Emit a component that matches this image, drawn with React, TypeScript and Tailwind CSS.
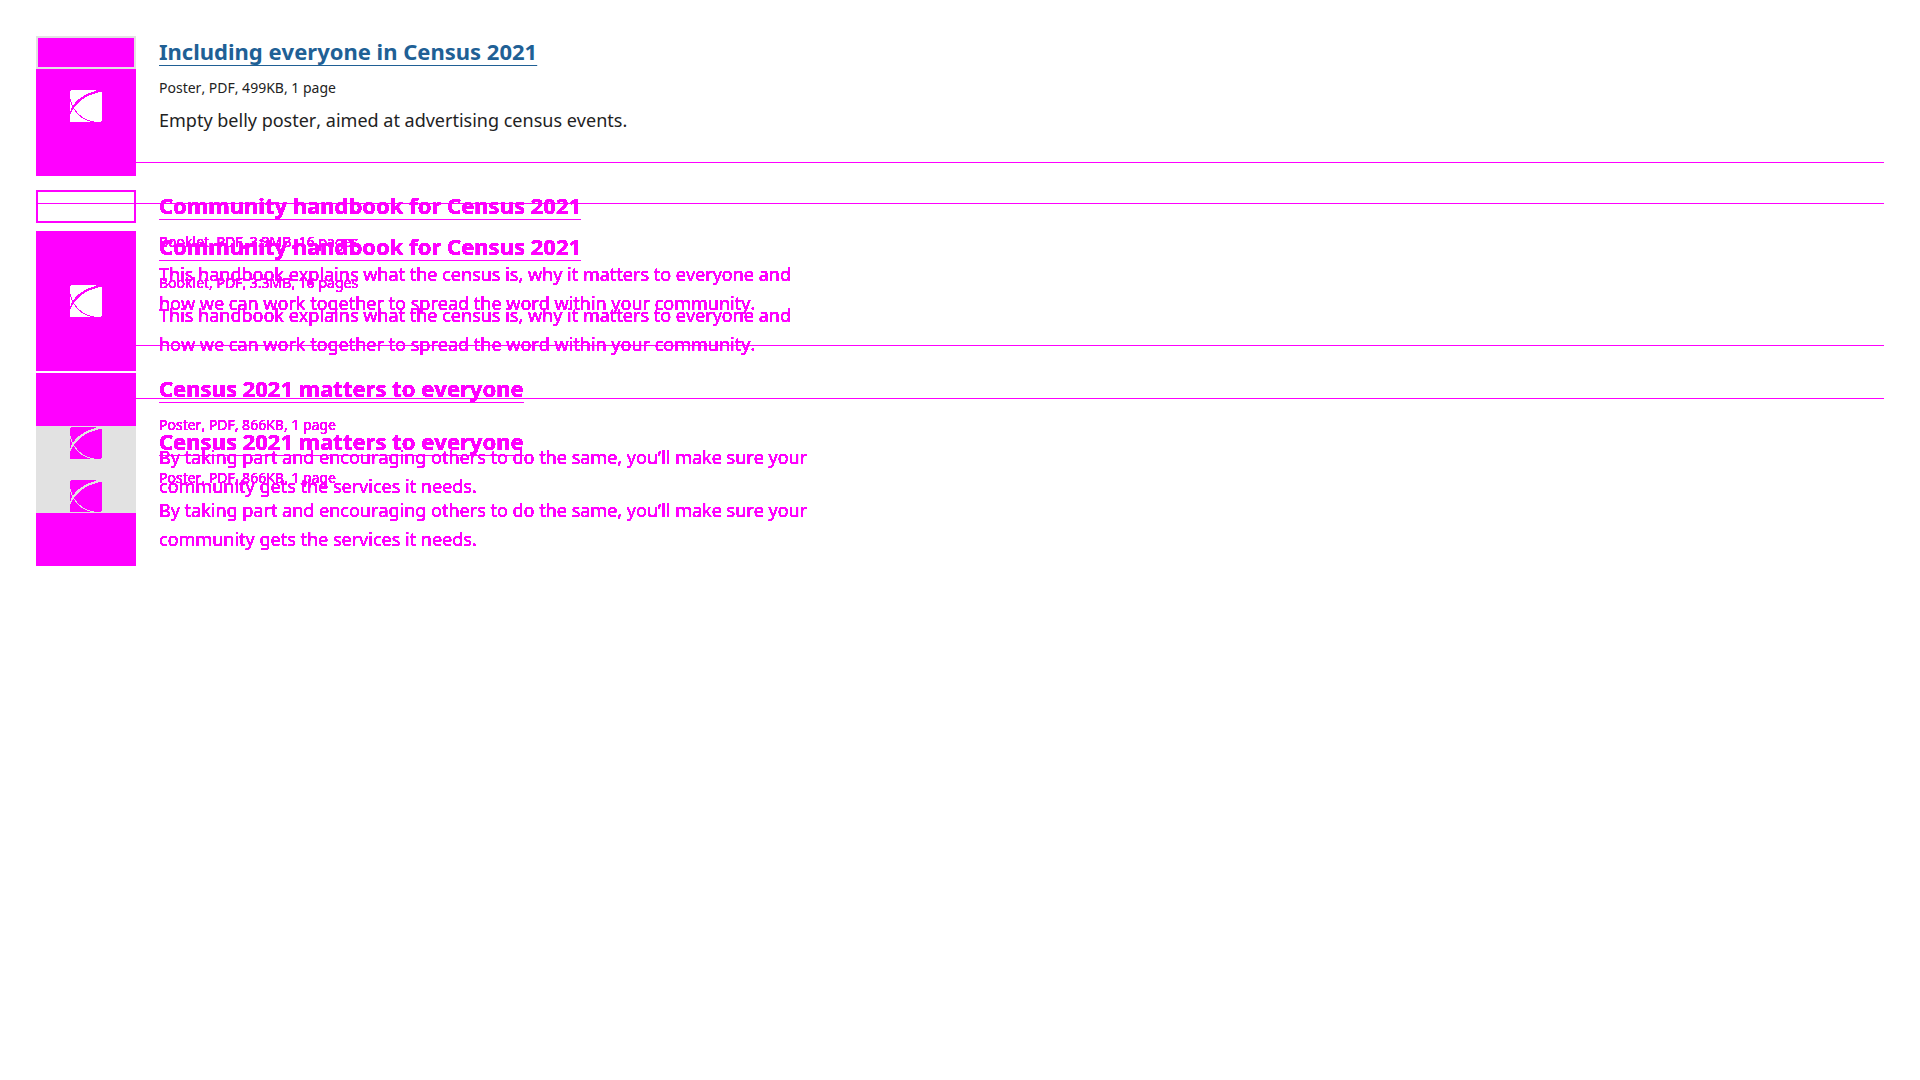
type Doc = { title: string; meta: string; text: string };

const intro: Doc = {
  title: "Including everyone in Census 2021",
  meta: "Poster, PDF, 499KB, 1 page",
  text: "Empty belly poster, aimed at advertising census events.",
};

const moved: Doc[] = [
  {
    title: "Community handbook for Census 2021",
    meta: "Booklet, PDF, 3.3MB, 16 pages",
    text: "This handbook explains what the census is, why it matters to everyone and how we can work together to spread the word within your community.",
  },
  {
    title: "Census 2021 matters to everyone",
    meta: "Poster, PDF, 866KB, 1 page",
    text: "By taking part and encouraging others to do the same, you’ll make sure your community gets the services it needs.",
  },
];

function Entry({ doc, changed }: { doc: Doc; changed?: boolean }) {
  return (
    <div
      className={
        changed
          ? "ml-[123px] max-w-[660px] text-[#ff00ff] [filter:url(#solid)]"
          : "ml-[123px] max-w-[660px] text-[#222222]"
      }
    >
      <h2 className="text-[22px] leading-[31px] font-bold">
        <a
          href="#"
          className={
            changed
              ? "underline decoration-1 underline-offset-[5px] [text-decoration-skip-ink:none]"
              : "text-[#206095] underline decoration-1 underline-offset-[5px] [text-decoration-skip-ink:none]"
          }
        >
          {doc.title}
        </a>
      </h2>
      <p className="mt-[9px] text-[14px] leading-[24px]">{doc.meta}</p>
      <p className="mt-[6px] text-[18px] leading-[29px]">{doc.text}</p>
    </div>
  );
}

function Mark({ ink, line }: { ink: string; line: string }) {
  return (
    <svg width="32" height="32" viewBox="0 0 32 32" shapeRendering="crispEdges" aria-hidden="true">
      <path d="M1 0H26V2H32V30L30 32H0V1Z" fill={ink} />
      <path d="M0 24C2 16 6 12 10 9C15 5 20 3 28 1V2C20 4 16 6 12 9C8 12 4 16 2 20L0 24Z" fill={line} stroke={line} strokeWidth="1.2" />
      <path d="M0 9C2 17 4 20 8 24C12 28 17 31 24 32" fill="none" stroke={line} strokeWidth="1" />
    </svg>
  );
}

function Thumbnails() {
  return (
    <div className="relative [grid-area:1/1] w-[100px]">
      <div className="h-[33px] border-2 border-[#e2e2e2] bg-[#ff00ff]" />
      <div className="flex h-[107px] justify-center bg-[#ff00ff] pt-[21px]">
        <Mark ink="#ffffff" line="#ff00ff" />
      </div>
      <div className="mt-[14px] h-[33px] border-2 border-[#ff00ff]" />
      <div className="mt-2 flex h-[140px] items-center justify-center bg-[#ff00ff]">
        <Mark ink="#ffffff" line="#ff00ff" />
      </div>
      <div className="mt-[2px] h-[53px] bg-[#ff00ff]" />
      <div className="flex h-[87px] flex-col items-center gap-[21px] bg-[#e2e2e2] pt-px">
        <Mark ink="#ff00ff" line="#e2e2e2" />
        <Mark ink="#ff00ff" line="#e2e2e2" />
      </div>
      <div className="h-[53px] bg-[#ff00ff]" />
    </div>
  );
}

export default function App() {
  return (
    <main className="grid bg-white p-9 font-['Noto_Sans',sans-serif] [font-kerning:none]">
      <svg width="0" height="0" className="absolute" aria-hidden="true">
        <filter id="solid" x="0" y="-5%" width="100%" height="110%" colorInterpolationFilters="sRGB">
          <feComponentTransfer>
            <feFuncA type="linear" slope="12" intercept="-1" />
          </feComponentTransfer>
        </filter>
      </svg>
      <ul className="[grid-area:1/1]">
        <li className="min-h-[126px]">
          <Entry doc={intro} />
        </li>
        {moved.map((doc) => (
          <li key={doc.title} className="min-h-[183px] border-t border-[#ff00ff] pt-[27px]">
            <Entry doc={doc} changed />
          </li>
        ))}
      </ul>
      <ul className="[grid-area:1/1] pt-[167px]">
        {moved.map((doc) => (
          <li key={doc.title} className="min-h-[195px] border-t border-[#ff00ff] pt-[27px]">
            <Entry doc={doc} changed />
          </li>
        ))}
      </ul>
      <Thumbnails />
    </main>
  );
}
